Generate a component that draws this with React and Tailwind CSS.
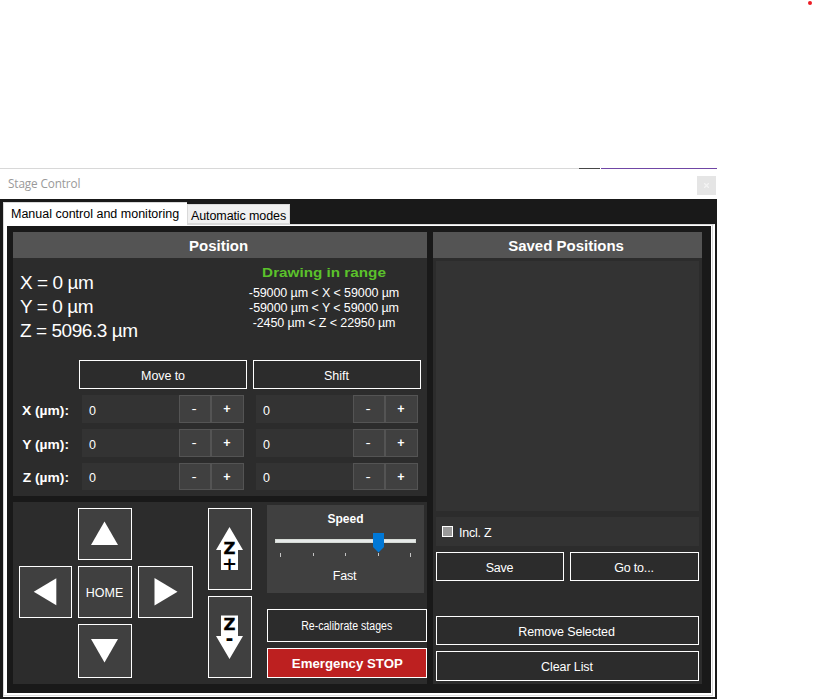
import React from "react";

const btn = "flex items-center justify-center border border-white text-white whitespace-nowrap";

function Axis({ name, h, pad }) {
  return (
    <div className={`flex ${h}`}>
      <div className={`flex w-[69px] items-center pl-[9px] text-[12px] font-bold text-white ${pad}`}>
        <span className="block w-[47px] origin-right scale-x-[1.15] whitespace-nowrap text-right">{name} (µm):</span>
      </div>
      <Spin pad={pad} />
      <div className="w-3" />
      <Spin pad={pad} />
    </div>
  );
}

function Spin({ pad }) {
  return (
    <div className="flex w-[162px] text-white">
      <div className={`flex w-[97px] items-center bg-[#333333] pl-[7px] ${pad}`}>0</div>
      <div className="flex w-8 items-center justify-center border border-[#545454] bg-[#404040] pr-[2px] pt-px"><span className="scale-x-125">-</span></div>
      <div className="flex w-[33px] items-center justify-center border border-[#545454] bg-[#404040] pr-px pt-px font-bold">+</div>
    </div>
  );
}

function Arrow({ points, label }) {
  return (
    <button aria-label={label} className="border border-white bg-[#404040]">
      <svg className="block h-full w-full" viewBox="0 0 52 50" preserveAspectRatio="xMidYMid meet">
        <polygon points={points} fill="white" />
      </svg>
    </button>
  );
}

function Vertical({ up }) {
  return (
    <button className="h-[82px] w-[44px] border border-white bg-[#404040]">
      <svg className="block" width="42" height="80" viewBox="0 0 42 80">
        <polygon
          points={up ? "20.5,18 34,41 29,41 29,61 12,61 12,41 7,41" : "20.5,62 34,39 29,39 29,18.5 12,18.5 12,39 7,39"}
          fill="white"
        />
        <text x="20.5" y={up ? 45 : 33} textAnchor="middle" fontFamily="DejaVu Sans" fontWeight="bold" fontSize="16.5" stroke="black" strokeWidth="0.3" fill="black">Z</text>
        <text x="20.5" y={up ? 60.5 : 47.5} textAnchor="middle" fontFamily="DejaVu Sans" fontWeight="bold" fontSize={up ? 18 : 19} fill="black">{up ? "+" : "-"}</text>
      </svg>
    </button>
  );
}

function TitleBar() {
  return (
    <div className="h-[31px] bg-white">
      <div className="flex h-px">
        <div className="w-[579px] bg-[#d8d8d8]" />
        <div className="w-[21px] bg-[#484848]" />
        <div className="w-px bg-white" />
        <div className="w-[116px] bg-[#7046a5]" />
      </div>
      <div className="flex h-[30px] items-center justify-between pl-2 pr-px">
        <span className="-mt-px origin-left scale-x-[0.98] font-['Open_Sans',sans-serif] text-[12px] tracking-[-0.13px] text-[#999999]">Stage Control</span>
        <span className="mt-[3px] flex h-[19px] w-[19px] items-center justify-center bg-[#e5e5e5]">
          <svg width="5" height="5" viewBox="0 0 5 5"><path d="M0 0L5 5M5 0L0 5" stroke="#f3f3f3" strokeWidth="1.3" /></svg>
        </span>
      </div>
    </div>
  );
}

function Heading({ children }) {
  return (
    <h2 className="flex h-[26px] items-center justify-center bg-[#545454] pr-[2px] pt-[3px] text-[14px] font-bold text-white">
      <span className="scale-x-[1.07]">{children}</span>
    </h2>
  );
}

function Position() {
  return (
    <section className="h-[264px] bg-[#2c2c2c]">
      <Heading>Position</Heading>
      <div className="flex h-[102px] text-white">
        <div className="w-[208px] pl-[7px] pt-[13px] text-[19px] leading-[24px] tracking-[-0.45px]">
          <div>X = 0 µm</div>
          <div>Y = 0 µm</div>
          <div>Z = 5096.3 µm</div>
        </div>
        <div className="w-[206px] pt-[7px] text-center text-[12.5px] leading-[15px] tracking-[-0.1px]">
          <div className="mb-[5px] scale-x-[1.13] text-[13.5px] font-bold leading-[16px] tracking-normal text-[#5bc22b]">Drawing in range</div>
          <div>-59000 µm &lt; X &lt; 59000 µm</div>
          <div>-59000 µm &lt; Y &lt; 59000 µm</div>
          <div>-2450 µm &lt; Z &lt; 22950 µm</div>
        </div>
      </div>
      <div className="flex gap-[6px] pl-[66px]">
        <button className={`${btn} h-[29px] w-[168px] pt-[3px] tracking-[-0.1px]`}>Move to</button>
        <button className={`${btn} h-[29px] w-[168px] pt-[3px] pr-px`}>Shift</button>
      </div>
      <div className="mt-[6px] flex flex-col gap-[6px]">
        <Axis name="X" h="h-[28px]" pad="pt-[5px]" />
        <Axis name="Y" h="h-[28px]" pad="pt-[5px]" />
        <Axis name="Z" h="h-[27px]" pad="pt-[4px]" />
      </div>
    </section>
  );
}

function Motion() {
  return (
    <section className="flex h-[182px] bg-[#2c2c2c] pl-[6px]">
      <div className="mt-[6px] grid h-[170px] grid-cols-[53px_54px_55px] grid-rows-[52px_52px_54px] gap-[6px]">
        <span />
        <Arrow label="Up" points="25.5,12.5 39,36 12,36" />
        <span />
        <Arrow label="Left" points="14,24.7 37,11 37,38.4" />
        <button className={`${btn} bg-[#404040] pt-[2px] pr-px text-[12.5px]`}>HOME</button>
        <Arrow label="Right" points="38,24.7 15,11 15,38.4" />
        <span />
        <Arrow label="Down" points="25.5,36.5 39,13 12,13" />
        <span />
      </div>
      <div className="ml-[15px] mt-[6px] flex flex-col gap-[6px]">
        <Vertical up />
        <Vertical />
      </div>
      <div className="ml-[15px] mt-[3px] w-[160px]">
        <div className="h-[88px] w-[157px] bg-[#404040] pt-[6px] text-center text-[12.5px] text-white">
          <div className="h-[16px] text-[12px] font-bold leading-[16px]">Speed</div>
          <svg className="block" width="157" height="40" viewBox="0 0 157 40">
            <rect x="8.5" y="12.5" width="140" height="3" fill="#e7eaea" stroke="#d6dbd6" />
            <path d="M13.5 26v4M46.5 26v3M78.5 26v3M111.5 26v3M143.5 26v4" stroke="#c4c4c4" />
            <path d="M106 6h11v14l-5.5 5.5L106 20z" fill="#0078d7" />
          </svg>
          <div className="pt-[2px] leading-[15px] pr-[2px] tracking-[-0.2px]">Fast</div>
        </div>
        <button className={`${btn} mt-4 h-[33px] w-full pt-[2px] pr-px text-[12px]`}><span className="scale-x-[0.88]">Re-calibrate stages</span></button>
        <button className={`${btn} mt-[6px] h-[30px] w-full bg-[#bd2020] pt-[3px] text-[12.5px] font-bold`}><span className="scale-x-[1.06]">Emergency STOP</span></button>
      </div>
    </section>
  );
}

function Saved() {
  return (
    <section className="h-[452px] w-[269px] bg-[#2c2c2c]">
      <Heading>Saved Positions</Heading>
      <div className="px-[3px] pt-[3px] text-white">
        <div className="h-[250px] bg-[#333333]" />
        <label className="mt-[6px] flex h-[29px] items-center bg-[#333333] pl-[6px]">
          <span className="h-[11px] w-[11px] border border-white bg-[#999999]" />
          <span className="ml-[6px] pt-[3px] text-[12.5px] tracking-[-0.25px]">Incl. Z</span>
        </label>
        <div className="mt-[6px] flex gap-[6px]">
          <button className={`${btn} h-[29px] w-[128px] pt-[3px] pr-px tracking-[-0.2px]`}>Save</button>
          <button className={`${btn} h-[29px] w-[129px] pt-[3px] pr-px tracking-[-0.2px]`}>Go to...</button>
        </div>
        <button className={`${btn} mt-[35px] h-[29px] w-full pt-[3px] pr-[2px] tracking-[-0.15px]`}>Remove Selected</button>
        <button className={`${btn} mt-[6px] h-[30px] w-full pt-[2px] pr-px tracking-[-0.1px]`}>Clear List</button>
      </div>
    </section>
  );
}

export default function App() {
  return (
    <main className="h-[699px] w-[813px] overflow-hidden bg-white font-['Liberation_Sans',Arial,sans-serif] text-[12.5px] leading-[15px]">
      <div className="flex h-[168px] justify-end pr-px pt-px">
        <span className="h-1 w-1 rounded-full bg-[#ed1c24]" />
      </div>
      <div className="h-[531px] w-[717px] bg-[#191919]">
        <TitleBar />
        <div className="flex h-[25px] items-end pl-[3px] pt-[3px]">
          <div className="z-10 -mb-px flex h-[23px] w-[184px] items-center whitespace-nowrap border-l border-t border-[#d9d9d9] bg-white pl-[7px] text-[12.5px]">Manual control and monitoring</div>
          <div className="flex h-[20px] w-[103px] items-center whitespace-nowrap border border-[#d9d9d9] bg-[#f0f0f0] pl-[3px] pt-[4px] text-[12.5px] tracking-[-0.1px]">Automatic modes</div>
        </div>
        <div className="h-[473px] w-[712px] ml-[3px] border border-[#d9d9d9] border-r-2 border-r-white border-b-white bg-white">
          <div className="h-[471px] w-[709px] border-b border-r border-[#d9d9d9] bg-white">
            <div className="h-[470px] w-[708px] border-l-[3px] border-t border-r border-b-2 border-white bg-[#191919] p-[6px] flex gap-[6px]">
              <div className="flex w-[414px] flex-col gap-[6px]">
                <Position />
                <Motion />
              </div>
              <Saved />
            </div>
          </div>
        </div>
      </div>
    </main>
  );
}
